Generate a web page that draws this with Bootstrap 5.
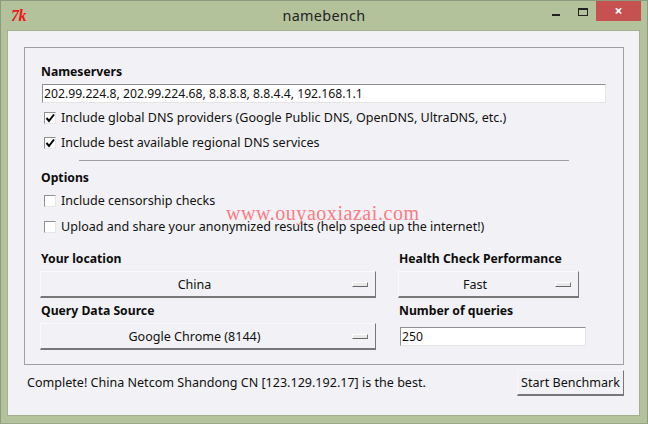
<!DOCTYPE html>
<html lang="en"><head><meta charset="utf-8"><title>namebench</title>
<link href="https://cdn.jsdelivr.net/npm/bootstrap@5.3.0/dist/css/bootstrap.min.css" rel="stylesheet">
<style>
html,body{margin:0;height:424px;overflow:hidden}
body{background:#b3c29b;font-family:"Noto Sans","DejaVu Sans",sans-serif;font-size:12.55px;line-height:16px;color:#111}
.shell{position:relative;width:648px;height:424px;border:1px solid #8c9a80;border-bottom-color:#9aa88a;display:flex;flex-direction:column}
.tbar{height:29px;flex:none;position:relative}
.tk{font:italic bold 16px/14px "Liberation Serif",serif;color:#f0141c;margin:8px 0 0 10px;letter-spacing:-.5px}
.ttl{font-size:14.4px;letter-spacing:.3px;color:#222;line-height:30px}
.tbtns{position:absolute;top:0;right:6px;height:20px}
.wmin{width:8px;height:2px;background:#222;margin:13px 18px 0 0}
.wmax{width:10px;height:8px;border:1px solid #222;border-top-width:2px;margin:7px 8px 0 0}
.wclose{width:45px;height:20px;background:#c75050;color:#fff;font-size:14px;line-height:20px;text-align:center;font-weight:700}
.client{flex:none;width:633px;height:386px;margin-left:6px;background:#f2f1f5;border:1px solid #a3b08f;padding:16px 16px 0 16px}
.frame{height:318px;width:600px;border:1px solid #a0a0a0;padding:16px 16px 0 16px}
.hd{font-weight:700;font-size:12.2px;height:16px;line-height:16px;color:#0c0c0c}
.tin{background:#fff;border:1px solid #e4e4e4;border-top-color:#8f8f8f;border-left-color:#8f8f8f;height:19px;line-height:17px;padding-left:1px;color:#111;font-size:12.2px}
.tin-w{margin:4px 1px 0}
.chk{display:flex;align-items:center;height:25px;margin-left:3px}
.chk-a{margin-top:2px}
.chk-b{margin-top:1px}
.box{width:12px;height:12px;flex:none;background:#fff;border:1px solid #8f8f8f;border-right-color:#e6e6e6;border-bottom-color:#e6e6e6;margin-right:5px;display:flex}
.rule{height:1px;background:#a0a0a0;margin:5px 38px 0}
.hd-o{margin-top:9px}
.mbtn{position:relative;height:27px;margin:4px 0 0 -1px;background:#f2f1f5;border:1px solid #eee;border-top-color:#fafafa;border-left-color:#fafafa;border-right-color:#777;border-bottom:2px solid #777;text-align:center;line-height:25px;padding-right:27px}
.mbtn-s{width:181px}
.hd-b{margin-top:5px}
.ind{position:absolute;right:7px;top:10px;width:16px;height:5px;background:#e9e9e9;border:1px solid #aaa;border-right-color:#777;border-bottom-color:#666;border-top-color:#fff;border-left-color:#fff}
.rowz{margin-top:12px}
.g1{width:335px;flex:none}
.g2{flex:none;margin-left:23px}
.tin-s{width:186px;margin:8px 0 0 1px}
.foot{width:600px;margin-top:5px;padding-left:3px}
.sbtn{width:107px;height:26px;background:#f2f1f5;border:1px solid #f8f8f8;border-right-color:#777;border-bottom:2px solid #777;text-align:center;line-height:23px}
.mark-w{position:absolute;left:225px;top:199px;font:20px/26px "Liberation Serif",serif;color:#f87c83;letter-spacing:.55px;white-space:nowrap}
</style></head><body>
<div class="shell">
 <div class="tbar d-flex justify-content-center">
  <span class="tk position-absolute start-0">7k</span>
  <span class="ttl">namebench</span>
  <div class="tbtns d-flex">
   <div class="wmin"></div><div class="wmax"></div><div class="wclose">×</div>
  </div>
 </div>
 <div class="client">
  <div class="frame">
   <div class="hd">Nameservers</div>
   <div class="tin tin-w">202.99.224.8, 202.99.224.68, 8.8.8.8, 8.8.4.4, 192.168.1.1</div>
   <div class="chk chk-a"><span class="box"><svg width="10" height="10" viewBox="0 0 10 10"><path d="M1.5 5 L4 8 L9 1.5" fill="none" stroke="#000" stroke-width="2"/></svg></span>Include global DNS providers (Google Public DNS, OpenDNS, UltraDNS, etc.)</div>
   <div class="chk"><span class="box"><svg width="10" height="10" viewBox="0 0 10 10"><path d="M1.5 5 L4 8 L9 1.5" fill="none" stroke="#000" stroke-width="2"/></svg></span>Include best available regional DNS services</div>
   <div class="rule"></div>
   <div class="hd hd-o">Options</div>
   <div class="chk chk-a"><span class="box"></span>Include censorship checks</div>
   <div class="chk chk-b"><span class="box"></span>Upload and share your anonymized results (help speed up the internet!)</div>
   <div class="d-flex rowz">
    <div class="g1">
     <div class="hd">Your location</div>
     <div class="mbtn">China<span class="ind"></span></div>
     <div class="hd hd-b">Query Data Source</div>
     <div class="mbtn">Google Chrome (8144)<span class="ind"></span></div>
    </div>
    <div class="g2">
     <div class="hd">Health Check Performance</div>
     <div class="mbtn mbtn-s">Fast<span class="ind"></span></div>
     <div class="hd hd-b">Number of queries</div>
     <div class="tin tin-s">250</div>
    </div>
   </div>
  </div>
  <div class="foot d-flex justify-content-between align-items-center">
   <span>Complete! China Netcom Shandong CN [123.129.192.17] is the best.</span>
   <div class="sbtn">Start Benchmark</div>
  </div>
 </div>
 <div class="mark-w">www.ouyaoxiazai.com</div>
</div>
</body></html>
